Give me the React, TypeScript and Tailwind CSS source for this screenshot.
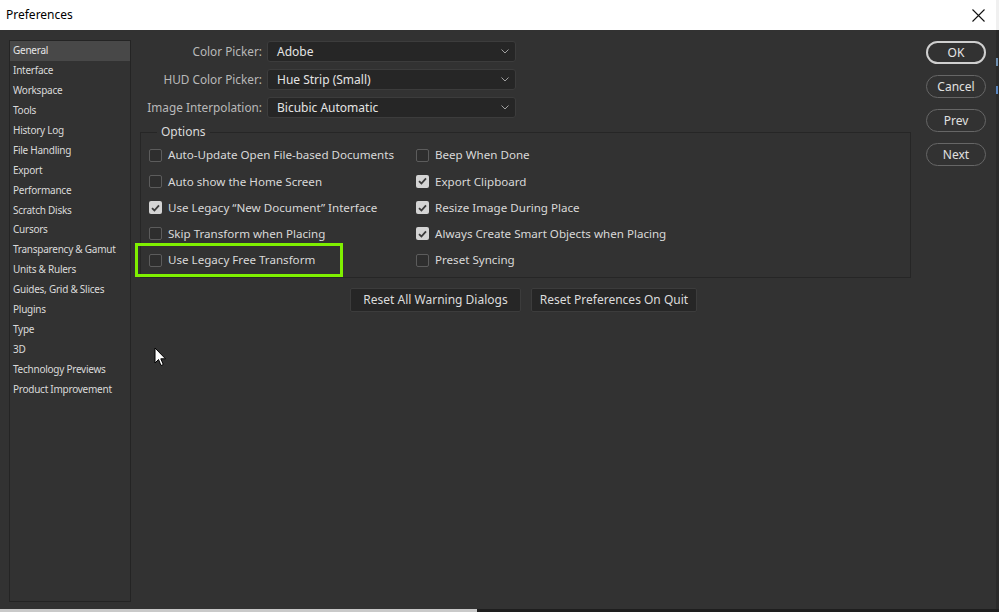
import React from "react";

const sidebar = [
  "General",
  "Interface",
  "Workspace",
  "Tools",
  "History Log",
  "File Handling",
  "Export",
  "Performance",
  "Scratch Disks",
  "Cursors",
  "Transparency & Gamut",
  "Units & Rulers",
  "Guides, Grid & Slices",
  "Plugins",
  "Type",
  "3D",
  "Technology Previews",
  "Product Improvement",
];

const dropdowns = [
  ["Color Picker:", "Adobe"],
  ["HUD Color Picker:", "Hue Strip (Small)"],
  ["Image Interpolation:", "Bicubic Automatic"],
];

const leftOpts: [string, boolean][] = [
  ["Auto-Update Open File-based Documents", false],
  ["Auto show the Home Screen", false],
  ["Use Legacy \u201cNew Document\u201d Interface", true],
  ["Skip Transform when Placing", false],
  ["Use Legacy Free Transform", false],
];
const rightOpts: [string, boolean][] = [
  ["Beep When Done", false],
  ["Export Clipboard", true],
  ["Resize Image During Place", true],
  ["Always Create Smart Objects when Placing", true],
  ["Preset Syncing", false],
];

function Check({ on }: { on: boolean }) {
  return on ? (
    <div className="w-[13px] h-[13px] rounded-[2px] bg-[#d4d4d4] flex items-center justify-center shrink-0">
      <svg width="9" height="8" viewBox="0 0 9 8">
        <path d="M1 4.2 L3.4 6.5 L8 1.3" fill="none" stroke="#3a3a3a" strokeWidth="1.8" />
      </svg>
    </div>
  ) : (
    <div className="w-[13px] h-[13px] rounded-[2px] border border-[#5c5c5c] bg-[#2e2e2e] shrink-0" />
  );
}

function Opt({ label, on }: { label: string; on: boolean }) {
  return (
    <div className="h-[26.25px] flex items-center gap-[6px]">
      <Check on={on} />
      <span className="text-[11.6px] text-[#d9d9d9] whitespace-nowrap">{label}</span>
    </div>
  );
}

function Pill({ label, primary }: { label: string; primary?: boolean }) {
  return (
    <div
      className={
        primary
          ? "w-[60px] h-[23px] rounded-full border-2 border-[#cfcfcf] flex items-center justify-center text-[12px] text-[#e6e6e6]"
          : "w-[60px] h-[23px] rounded-full border-[1.5px] border-[#666666] flex items-center justify-center text-[12px] text-[#e0e0e0]"
      }
    >
      {label}
    </div>
  );
}

export default function App() {
  return (
    <div
      className="w-[999px] h-[612px] overflow-hidden flex flex-col bg-[#1b1b1b] relative"
      style={{ fontFamily: '"Noto Sans", "Open Sans", sans-serif' }}
    >
      <div className="flex h-[609px]">
        <div className="w-[996px] flex flex-col">
          {/* Title bar */}
          <div className="h-[30px] bg-white flex items-center justify-between pl-[6px] pr-[11px]">
            <span className="text-[12px] text-black">Preferences</span>
            <svg width="13" height="13" viewBox="0 0 13 13">
              <path d="M0.5 0.5 L12.5 12.5 M12.5 0.5 L0.5 12.5" stroke="#111" strokeWidth="1.1" />
            </svg>
          </div>
          {/* Body */}
          <div className="flex-1 bg-[#323232] flex pl-[9px] pt-[10px]">
            {/* Sidebar */}
            <div className="w-[122px] h-[562px] border border-[#242424] flex flex-col pt-0">
              {sidebar.map((s, i) => (
                <div
                  key={s}
                  className={
                    "h-[19.9px] flex items-center pl-[3px] text-[10px] tracking-[-0.25px] whitespace-nowrap " +
                    (i === 0 ? "bg-[#484848] text-[#e6e6e6]" : "text-[#dadada]")
                  }
                >
                  {s}
                </div>
              ))}
            </div>
            {/* Content */}
            <div className="ml-[9px] w-[771px] flex flex-col pt-[1px]">
              <div className="flex flex-col gap-[7px]">
                {dropdowns.map(([l, v]) => (
                  <div key={l} className="flex items-center h-[21px]">
                    <div className="w-[122px] text-right text-[11.8px] text-[#b9b9b9] whitespace-nowrap">{l}</div>
                    <div className="ml-[5px] w-[249px] h-[21px] rounded-[3px] bg-[#262626] border border-[#3c3c3c] flex items-center justify-between pl-[9px] pr-[6px]">
                      <span className="text-[12px] text-[#e4e4e4]">{v}</span>
                      <svg width="8" height="5" viewBox="0 0 8 5">
                        <path d="M0.5 0.5 L4 4 L7.5 0.5" fill="none" stroke="#a0a0a0" strokeWidth="1" />
                      </svg>
                    </div>
                  </div>
                ))}
              </div>
              <fieldset className="mt-[7px] border border-[#262626] h-[153px] px-[8px] pt-[0px] relative">
                <legend className="ml-[8px] px-[4px] text-[12px] text-[#dadada] leading-[14px]">Options</legend>
                <div className="flex pt-[3px]">
                  <div className="w-[267px] flex flex-col">
                    {leftOpts.map(([l, o]) => (
                      <Opt key={l} label={l} on={o} />
                    ))}
                  </div>
                  <div className="flex flex-col">
                    {rightOpts.map(([l, o]) => (
                      <Opt key={l} label={l} on={o} />
                    ))}
                  </div>
                </div>
                <div className="absolute left-[-6px] top-[104px] w-[208px] h-[34px] border-[3px] border-[#7ff000]" />
              </fieldset>
              <div className="mt-[10px] flex justify-center gap-[10px] pr-[4px]">
                <div className="w-[171px] h-[24px] rounded-[2px] bg-[#262626] border border-[#3c3c3c] flex items-center justify-center text-[12px] text-[#dcdcdc]">
                  Reset All Warning Dialogs
                </div>
                <div className="w-[166px] h-[24px] rounded-[2px] bg-[#262626] border border-[#3c3c3c] flex items-center justify-center text-[12px] text-[#dcdcdc]">
                  Reset Preferences On Quit
                </div>
              </div>
            </div>
            {/* Right buttons */}
            <div className="ml-[15px] pt-[1px] flex flex-col gap-[11px]">
              <Pill label="OK" primary />
              <Pill label="Cancel" />
              <Pill label="Prev" />
              <Pill label="Next" />
            </div>
          </div>
        </div>
        <div className="w-[3px] bg-[#2a2a2a] flex flex-col">
          <div className="h-[30px] bg-[#f0f0f0]" />
          <div className="mt-[28px] h-[8px] w-[2px] bg-[#6f8fb0]" />
          <div className="mt-[20px] h-[8px] w-[2px] bg-[#5a86c0]" />
        </div>
      </div>
      <div className="flex h-[3px]">
        <div className="w-[477px] bg-[#c9c9c9]" />
        <div className="flex-1 bg-[#1e1e1e]" />
      </div>
      {/* Mouse cursor */}
      <svg className="absolute left-[154px] top-[347px]" width="13" height="20" viewBox="0 0 13 20">
        <path d="M1 1 L1 16 L4.5 12.5 L7 18.5 L9.3 17.5 L6.8 11.8 L11.5 11.8 Z" fill="#ffffff" stroke="#000" strokeWidth="1" strokeLinejoin="round" />
      </svg>
    </div>
  );
}
